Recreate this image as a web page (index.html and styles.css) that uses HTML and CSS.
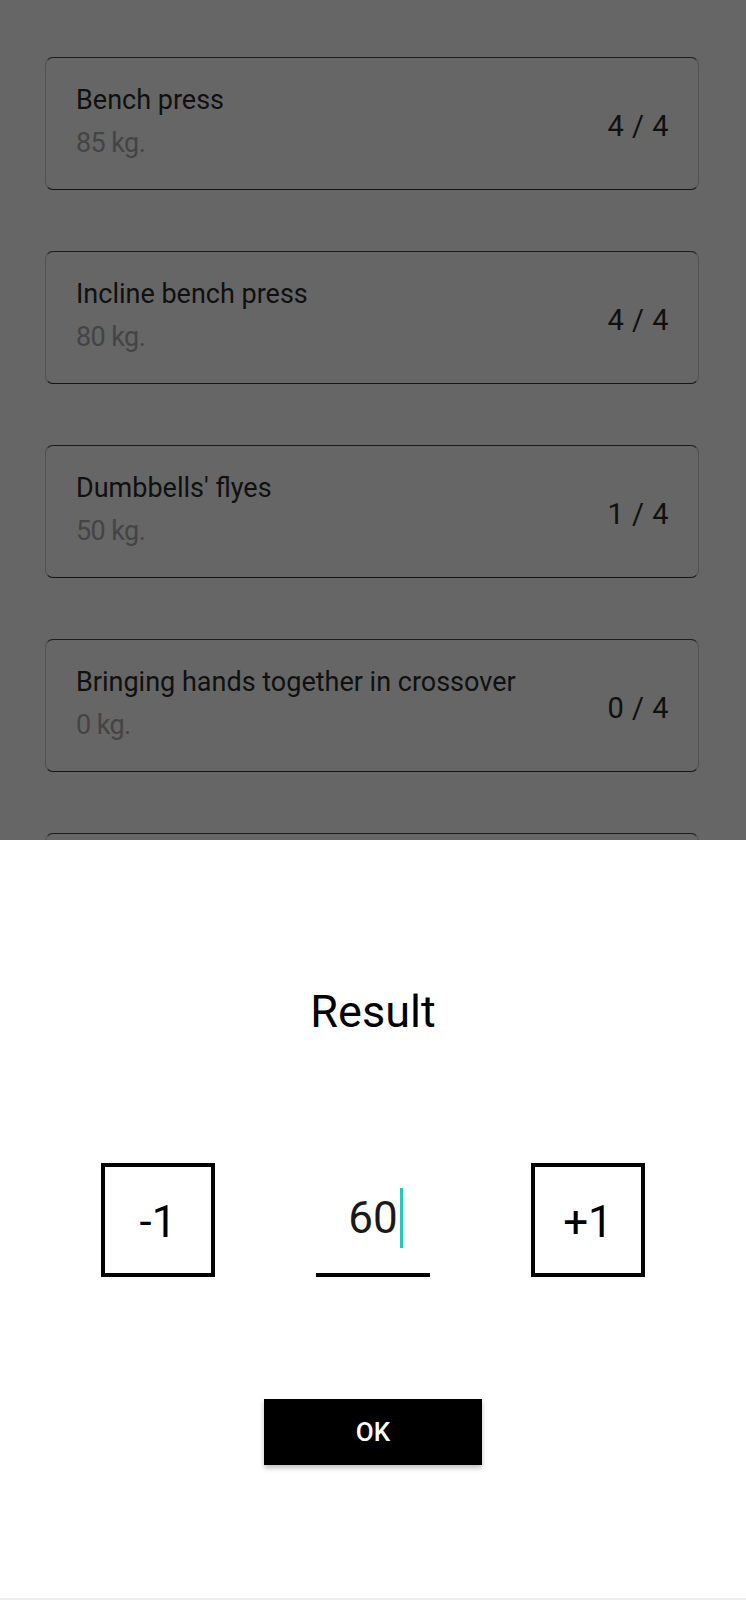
FILE: index.html
```html
<!DOCTYPE html>
<html>
<head>
<meta charset="utf-8">
<link rel="stylesheet" href="styles.css">
</head>
<body>
<div class="screen">
  <div class="list">
    <div class="card">
      <div class="card-text">
        <div class="card-title">Bench press</div>
        <div class="card-sub">85 kg.</div>
      </div>
      <div class="card-count">4 / 4</div>
    </div>
    <div class="card">
      <div class="card-text">
        <div class="card-title">Incline bench press</div>
        <div class="card-sub">80 kg.</div>
      </div>
      <div class="card-count">4 / 4</div>
    </div>
    <div class="card">
      <div class="card-text">
        <div class="card-title">Dumbbells' flyes</div>
        <div class="card-sub">50 kg.</div>
      </div>
      <div class="card-count">1 / 4</div>
    </div>
    <div class="card">
      <div class="card-text">
        <div class="card-title">Bringing hands together in crossover</div>
        <div class="card-sub">0 kg.</div>
      </div>
      <div class="card-count">0 / 4</div>
    </div>
    <div class="card"></div>
  </div>
  <div class="sheet">
    <div class="sheet-title">Result</div>
    <div class="stepper">
      <div class="step-btn">-1</div>
      <div class="value-field"><span class="value">60<span class="cursor"></span></span></div>
      <div class="step-btn">+1</div>
    </div>
    <div class="ok-btn">OK</div>
  </div>
</div>
</body>
</html>
```

FILE: styles.css
```css
* { box-sizing: border-box; }
html, body { margin: 0; padding: 0; }
body {
  width: 746px;
  height: 1600px;
  overflow: hidden;
  font-family: Roboto, "Noto Sans", sans-serif;
  background: #666666;
}
.screen {
  display: flex;
  flex-direction: column;
  height: 1600px;
}
.list {
  height: 840px;
  overflow: hidden;
  padding: 57px 47px 0 45px;
  display: flex;
  flex-direction: column;
  gap: 61px;
  background: #666666;
}
.card {
  flex: 0 0 133px;
  height: 133px;
  border: 1px solid #505050;
  border-top-color: #1c1c1c;
  border-bottom-color: #141414;
  border-radius: 8px;
  display: flex;
  align-items: center;
  justify-content: space-between;
  padding: 0 29px 4px 30px;
}
.card-text {
  display: flex;
  flex-direction: column;
  gap: 13px;
}
.card-title {
  font-size: 27px;
  line-height: 30px;
  color: #101010;
}
.card-sub {
  font-size: 27px;
  line-height: 30px;
  color: #444444;
  letter-spacing: -0.6px;
}
.card-count {
  font-size: 29px;
  line-height: 34px;
  color: #101010;
  margin-top: 8px;
  letter-spacing: 0.5px;
}
.sheet {
  flex: 1;
  background: #ffffff;
  border-bottom: 2px solid #efefef;
  display: flex;
  flex-direction: column;
  align-items: center;
  padding-top: 146px;
}
.sheet-title {
  font-size: 45px;
  line-height: 52px;
  color: #000;
}
.stepper {
  margin-top: 125px;
  width: 100%;
  display: flex;
  justify-content: space-evenly;
}
.step-btn {
  width: 114px;
  height: 114px;
  border: 4px solid #000;
  display: flex;
  align-items: center;
  justify-content: center;
  font-size: 44px;
  color: #000;
  padding-top: 4px;
}
.value-field {
  width: 114px;
  height: 114px;
  border-bottom: 4px solid #000;
  display: flex;
  align-items: center;
  justify-content: center;
  font-size: 44px;
  color: #1a1a1a;
}
.value {
  display: inline-flex;
  align-items: center;
  line-height: 52px;
}
.cursor {
  display: inline-block;
  width: 3px;
  height: 60px;
  margin-left: 2px;
  margin-right: -5px;
  background: #26c9b8;
}
.ok-btn {
  margin-top: 122px;
  width: 218px;
  height: 66px;
  background: #000;
  color: #fff;
  font-size: 26px;
  font-weight: 500;
  display: flex;
  align-items: center;
  justify-content: center;
  box-shadow: 0 3px 5px rgba(0,0,0,0.25);
}
```
